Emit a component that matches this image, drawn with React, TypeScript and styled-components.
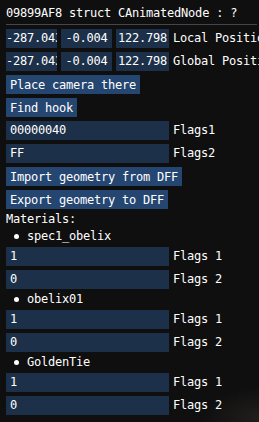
import React from 'react';
import styled, { createGlobalStyle } from 'styled-components';

const GlobalStyle = createGlobalStyle`
  html, body {
    margin: 0;
    padding: 0;
    background: #0f0f0f;
  }
`;

const Window = styled.div`
  width: 259px;
  height: 422px;
  box-sizing: border-box;
  padding: 7px 0 0 6px;
  display: flex;
  flex-direction: column;
  gap: 4px;
  overflow: hidden;
  color: #ffffff;
  font-family: 'DejaVu Sans Mono', 'Liberation Mono', monospace;
  font-size: 12px;
  letter-spacing: -0.22px;
  background:
    radial-gradient(ellipse 60px 30px at 262px 418px, rgba(70, 62, 56, 0.35), rgba(15, 15, 15, 0) 100%),
    #0f0f0f;
`;

const Text = styled.div`
  height: 13px;
  line-height: 13px;
  white-space: nowrap;
`;

const Separator = styled.div`
  width: 251px;
  height: 1px;
  background: #45454e;
`;

const Row = styled.div`
  display: flex;
  align-items: center;
  gap: 4px;
  height: 19px;
  white-space: nowrap;
`;

const DragGroup = styled.div`
  display: flex;
  gap: 4px;
  width: 163px;
  flex: none;
`;

const DragField = styled.div<{ $w: number }>`
  width: ${(p) => p.$w}px;
  height: 19px;
  line-height: 19px;
  background: #1d3049;
  text-align: center;
  white-space: nowrap;
  overflow: hidden;
  flex: none;
`;

const InputField = styled.div`
  width: 163px;
  height: 19px;
  line-height: 19px;
  box-sizing: border-box;
  padding: 0 4px;
  background: #1d3049;
  white-space: nowrap;
  overflow: hidden;
  flex: none;
`;

const Label = styled.span`
  line-height: 19px;
  white-space: nowrap;
`;

const Button = styled.button`
  align-self: flex-start;
  height: 19px;
  line-height: 19px;
  padding: 0 4px;
  margin: 0;
  border: none;
  border-radius: 0;
  background: #254670;
  color: #ffffff;
  font: inherit;
  letter-spacing: inherit;
  white-space: nowrap;
  cursor: pointer;
`;

const BulletRow = styled.div`
  display: flex;
  align-items: center;
  height: 13px;
  line-height: 13px;
  white-space: nowrap;
`;

const Dot = styled.span`
  width: 5px;
  height: 5px;
  border-radius: 50%;
  background: #ffffff;
  margin: 0 8px 0 8px;
  flex: none;
`;

function Vec3({ values, label }: { values: string[]; label: string }) {
    const widths = [51, 51, 53];
    return (
        <Row>
            <DragGroup>
                {values.map((v, i) => (
                    <DragField key={i} $w={widths[i]}>
                        {v}
                    </DragField>
                ))}
            </DragGroup>
            <Label>{label}</Label>
        </Row>
    );
}

function Field({ value, label }: { value: string; label: string }) {
    return (
        <Row>
            <InputField>{value}</InputField>
            <Label>{label}</Label>
        </Row>
    );
}

const materials = ['spec1_obelix', 'obelix01', 'GoldenTie'];

export default function App() {
    return (
        <>
            <GlobalStyle />
            <Window>
                <Text>09899AF8 struct CAnimatedNode : ?</Text>
                <Separator />
                <Vec3 values={['-287.043', '-0.004', '122.798']} label="Local Position" />
                <Vec3 values={['-287.043', '-0.004', '122.798']} label="Global Position" />
                <Button>Place camera there</Button>
                <Button>Find hook</Button>
                <Field value="00000040" label="Flags1" />
                <Field value="FF" label="Flags2" />
                <Button>Import geometry from DFF</Button>
                <Button>Export geometry to DFF</Button>
                <Text>Materials:</Text>
                {materials.map((m) => (
                    <React.Fragment key={m}>
                        <BulletRow>
                            <Dot />
                            {m}
                        </BulletRow>
                        <Field value="1" label="Flags 1" />
                        <Field value="0" label="Flags 2" />
                    </React.Fragment>
                ))}
            </Window>
        </>
    );
}
